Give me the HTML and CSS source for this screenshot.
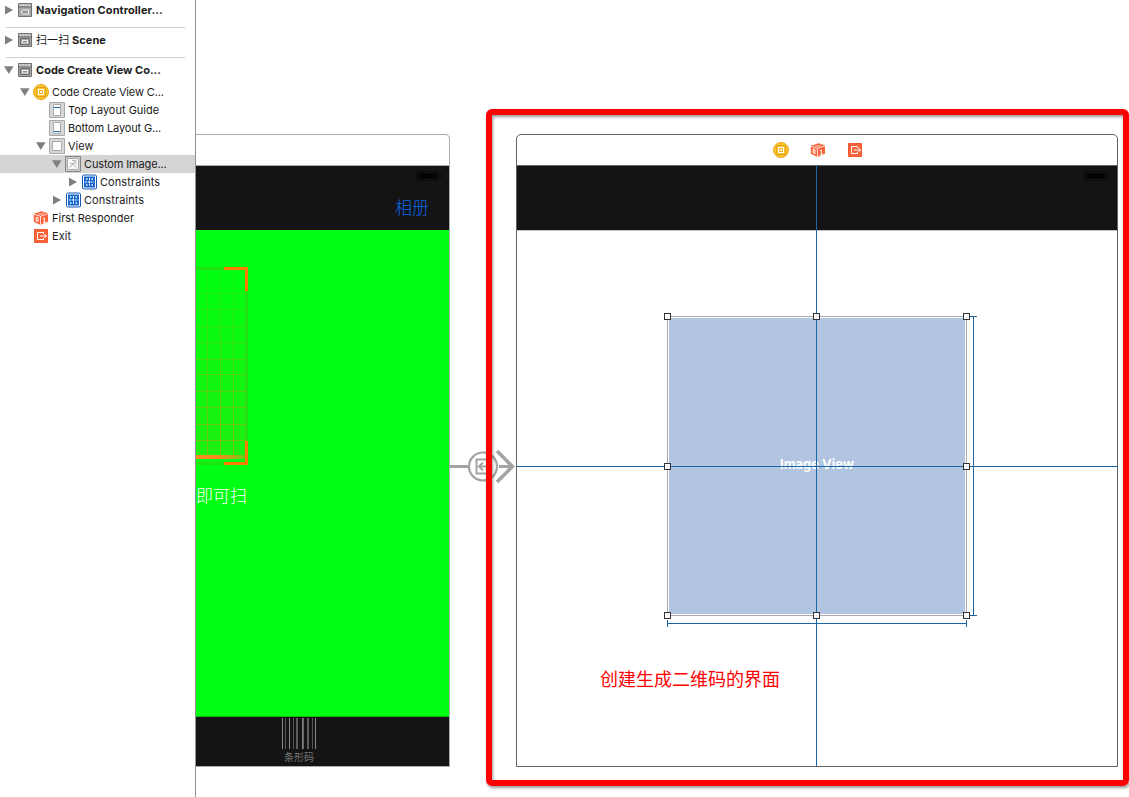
FILE: index.html
```html
<!DOCTYPE html>
<html lang="zh">
<head>
<meta charset="utf-8">
<title>Storyboard</title>
<link rel="stylesheet" href="styles.css">
</head>
<body>
<svg class="defs" width="0" height="0">
  <defs>
    <symbol id="right" viewBox="0 0 16 16"><path d="M4 3.8v8.600L12 8z" fill="#7f7f7f"/></symbol>
    <symbol id="down" viewBox="0 0 16 16"><path d="M3 4.200h9.600L7.800 12z" fill="#7f7f7f"/></symbol>
    <symbol id="scene" viewBox="0 0 16 16">
      <path d="M1.500 1.500h13v13h-13z" fill="#a9a9a9" stroke="#707070"/>
      <path d="M2 2.500h12" stroke="#dedede" stroke-dasharray="1.500 1.500"/><path d="M3 3.500h11" stroke="#dedede" stroke-dasharray="1.500 1.500"/><path d="M1 5h14" stroke="#707070"/>
      <path d="M3.500 6.500h9v6h-9z" fill="none" stroke="#6d6d6d"/><path d="M5.500 8.500h5v2.500h-5z" fill="#8d8d8d" stroke="#f2f2f2"/>
    </symbol>
    <symbol id="navscene" viewBox="0 0 16 16">
      <path d="M1.500 1.500h13v13h-13z" fill="#a9a9a9" stroke="#707070"/>
      <path d="M2 2.500h12" stroke="#dedede" stroke-dasharray="1.500 1.500"/><path d="M3 3.500h11" stroke="#dedede" stroke-dasharray="1.500 1.500"/><path d="M1 5h14" stroke="#707070"/>
      <path d="M4 10l2.200-2h5.300v4H6.200z" fill="#999" stroke="#f2f2f2"/>
    </symbol>
    <symbol id="controller" viewBox="0 0 16 16">
      <circle cx="8" cy="8" r="7.500" fill="#fdc62c" stroke="#eaa41b"/>
      <path d="M3.500 3.500h9v9h-9z" fill="#fdc62c" stroke="#e5a019"/><path d="M5.500 5.500h5v5h-5z" fill="#f3b324" stroke="#fff"/>
      <path d="M7 7h2v2H7z" fill="#fff7dc"/>
    </symbol>
    <symbol id="top" viewBox="0 0 16 16">
      <path d="M.5.5h15v15H.5z" fill="#d6d6d6" stroke="#a8a8a8"/><path d="M4.500 2.500h7v11h-7z" fill="#fff" stroke="#aaa"/><path d="M5 5.500h6" stroke="#1267a8"/>
    </symbol>
    <symbol id="bottom" viewBox="0 0 16 16">
      <path d="M.5.5h15v15H.5z" fill="#d6d6d6" stroke="#a8a8a8"/><path d="M4.500 2.500h7v11h-7z" fill="#fff" stroke="#aaa"/><path d="M5 11.500h6" stroke="#1267a8"/>
    </symbol>
    <symbol id="view" viewBox="0 0 16 16">
      <path d="M.5.5h15v15H.5z" fill="#d6d6d6" stroke="#a8a8a8"/><path d="M3.500 3.500h9v9h-9z" fill="#fff" stroke="#aaa"/>
    </symbol>
    <symbol id="image" viewBox="0 0 16 16">
      <path d="M.5.5h15v15H.5z" fill="#d0d0d0" stroke="#858585"/><path d="M2.500 2.500h11v11h-11z" fill="#f8f8f8" stroke="#aaa"/>
      <path d="M7 4.500h4M11 5L8 8l-3.500 3.500M5 7.500l3 .5 3 3.500M8.500 7h3" fill="none" stroke="#aaa" stroke-width=".9"/>
    </symbol>
    <symbol id="constraint" viewBox="0 0 16 16">
      <rect x="1" y=".5" width="15" height="15" rx="2.500" fill="#1459b8"/><path d="M2.500 2h12v12h-12z" fill="#1767cf" stroke="#fff"/>
      <path d="M8.500 4v8M4 8h9" stroke="#fff" stroke-dasharray="2 .8"/><path d="M5 5h1.500M10.500 5H12M5 11h1.500M10.500 11H12" stroke="#fff" stroke-width="1.300"/>
    </symbol>
    <symbol id="cube" viewBox="0 0 16 16">
      <path d="M.8 3.800l7.700-2.600L15 3.200v8.500L7.500 15 .8 11.800z" fill="#fa6339"/>
      <path d="M.8 4.300l6.700 2L15 3.700M7.500 6.300V15" fill="none" stroke="#fff" stroke-width=".8"/><path d="M4.500 3l6 1.800M5.500 5.200l6-2.800" stroke="#ffd0c2" stroke-width=".6"/>
      <path d="M3.200 7.200l1.800.6v4l-1.800-.9zM10 8.700l1.300-.7v4.500M9.800 13.200l3-1.200" fill="none" stroke="#fff" stroke-width="1"/>
    </symbol>
    <symbol id="exit" viewBox="0 0 16 16">
      <path d="M1.500 1.500h13v13h-13z" fill="#fa6339" stroke="#f05a32"/><path d="M10.500 6V4.500h-6v7h6V10M7 8h6.500M11.500 6l2 2-2 2" fill="none" stroke="#fff"/>
    </symbol>
  </defs>
</svg>

<aside class="outline">
  <div class="row head"><svg><use href="#right"/></svg><svg><use href="#navscene"/></svg><span>Navigation Controller...</span></div>
  <hr class="rule">
  <div class="row head"><svg><use href="#right"/></svg><svg><use href="#scene"/></svg><span><span class="han">扫一扫</span> Scene</span></div>
  <hr class="rule">
  <div class="row head"><svg><use href="#down"/></svg><svg><use href="#scene"/></svg><span class="snug">Code Create View Co...</span></div>
  <div class="tree">
    <div class="row l1"><svg><use href="#down"/></svg><svg><use href="#controller"/></svg><span class="cut">Code Create View C...</span></div>
    <div class="row l2 leaf"><svg><use href="#top"/></svg><span class="snug">Top Layout Guide</span></div>
    <div class="row l2 leaf"><svg><use href="#bottom"/></svg><span class="cut">Bottom Layout G...</span></div>
    <div class="row l2"><svg><use href="#down"/></svg><svg><use href="#view"/></svg><span class="snug">View</span></div>
    <div class="row l3 selected"><svg><use href="#down"/></svg><svg><use href="#image"/></svg><span class="cut">Custom Image...</span></div>
    <div class="row l4"><svg><use href="#right"/></svg><svg><use href="#constraint"/></svg><span>Constraints</span></div>
    <div class="row l3"><svg><use href="#right"/></svg><svg><use href="#constraint"/></svg><span>Constraints</span></div>
    <div class="row l1 leaf"><svg><use href="#cube"/></svg><span class="snug">First Responder</span></div>
    <div class="row l1 leaf"><svg><use href="#exit"/></svg><span>Exit</span></div>
  </div>
</aside>

<main class="canvas">
  <section class="scene scan">
    <div class="dock"></div>
    <div class="navbar">
      <svg class="battery" width="26" height="10"><rect x=".5" y=".5" width="22" height="9" rx="1.500" fill="none" stroke="#0b0b0b"/><path d="M2 2h19v6H2z" fill="#050505"/><path d="M24 3h1v4h-1z" fill="#050505"/></svg>
      <span class="album">相册</span>
    </div>
    <div class="scanner">
      <svg class="grid" width="60" height="204" viewBox="0 0 60 204">
        <defs>
          <linearGradient id="fade" x1="0" y1="0" x2="0" y2="1"><stop offset="0" stop-color="#ff8010" stop-opacity="0"/><stop offset="1" stop-color="#ff8010" stop-opacity=".12"/></linearGradient>
          <linearGradient id="lines" gradientUnits="userSpaceOnUse" x1="0" y1="0" x2="0" y2="200"><stop offset="0" stop-color="#ff8010" stop-opacity=".06"/><stop offset="1" stop-color="#ff8010" stop-opacity=".42"/></linearGradient>
          <linearGradient id="beam" x1="0" y1="0" x2="1" y2="0"><stop offset="0" stop-color="#ff8a20"/><stop offset=".5" stop-color="#f58a20"/><stop offset="1" stop-color="#ff8a20" stop-opacity=".3"/></linearGradient>
        </defs>
        <path d="M0 4h50v190H0z" fill="url(#fade)"/>
        <path d="M0 3.500h50M50.500 3v196M0 198.500h50" fill="none" stroke="#a06a12" stroke-opacity=".2" stroke-width="3"/>
        <path d="M11.500 4v190M24.500 4v190M37.500 4v190M0 28.500h50M0 38.500h0M0 44.500h50M0 61.500h50M0 77.500h50M0 94.500h50M0 109.500h50M0 126.500h50M0 142.500h50M0 159.500h50M0 175.500h50" stroke="url(#lines)"/>
        <path d="M0 190h49v4H0z" fill="url(#beam)"/>
        <path d="M28 3.500h24M50.500 2v24M50.500 176v24M28 198.500h24" stroke="#ff7c00" stroke-width="3" fill="none"/>
      </svg>
      <div class="hint">即可扫</div>
    </div>
    <div class="tabbar">
      <svg width="36" height="32"><path d="M1.500 0v31M8.500 0v31M21.500 0v31M34.500 0v31" stroke="#868686"/><path d="M4.500 0v31M12.500 0v31M31.500 0v31" stroke="#555"/><path d="M16 0v31M27 0v31" stroke="#5c5c5c" stroke-width="2"/><path d="M22.500 0v31" stroke="#666"/></svg>
      <span>条形码</span>
    </div>
  </section>

  <svg class="segue" width="68" height="36" viewBox="0 0 68 36" fill="none" stroke="#a3a3a3">
    <path d="M0 18.500h19M49 18.500h13" stroke-width="3"/><circle cx="33" cy="18.500" r="14" stroke-width="2.200"/>
    <path d="M37 14v-2.500H26.500v14H37V23M42 18.500H29M33 14.500l-4 4 4 4" stroke-width="2"/><path d="M47 3l15.500 15.500L47 34" stroke-width="3.500"/>
  </svg>

  <section class="scene code">
    <div class="dock">
      <svg><use href="#controller"/></svg><svg><use href="#cube"/></svg><svg><use href="#exit"/></svg>
    </div>
    <div class="navbar">
      <svg class="battery" width="26" height="10"><rect x=".5" y=".5" width="22" height="9" rx="1.500" fill="none" stroke="#0b0b0b"/><path d="M2 2h19v6H2z" fill="#050505"/><path d="M24 3h1v4h-1z" fill="#050505"/></svg>
    </div>
    <div class="content">
      <div class="imageview">Image View</div>
      <div class="note">创建生成二维码的界面</div>
    </div>
  </section>

  <svg class="guides" width="602" height="633" viewBox="516 134 602 633" fill="none" shape-rendering="crispEdges">
    <path d="M816.500 166v600M517 466.500h600M973.500 316v299M970 316.500h7M970 615.500h7M667 623.500h299M667.500 620v7M966.500 620v7" stroke="#1967a9"/>
    <g fill="#fff" fill-opacity=".88" stroke="#333">
      <path d="M664.500 313.500h6v6h-6zM813.500 313.500h6v6h-6zM963.500 313.500h6v6h-6zM664.500 463.500h6v6h-6zM963.500 463.500h6v6h-6zM664.500 612.500h6v6h-6zM813.500 612.500h6v6h-6zM963.500 612.500h6v6h-6z"/>
    </g>
  </svg>
  <div class="callout"></div>
</main>
</body>
</html>
```

FILE: styles.css
```css
* { box-sizing: border-box; }
body {
  margin: 0;
  width: 1129px;
  height: 797px;
  display: flex;
  overflow: hidden;
  background: #fff;
  color: #1c1c1c;
  font-family: Inter, "Noto Sans CJK SC", sans-serif;
  font-size: 11px;
}
svg { display: block; flex: none; }
.defs { position: absolute; }

.outline { width: 196px; border-right: 1px solid #8e8e8e; flex: none; }
.row { display: flex; align-items: center; height: 18px; white-space: nowrap; line-height: 14px; }
.row svg { width: 16px; height: 16px; }
.row > span { margin-left: 3px; letter-spacing: 0.08px; }
.row > .snug { letter-spacing: 0; }
.row > .cut { letter-spacing: -0.14px; }
.head { height: 20px; padding-left: 1px; font-weight: 700; }
.head .han { font-weight: 400; line-height: 1; }
.rule { border: 0; height: 1px; background: #cfcfcf; margin: 7px 10px 2px 6px; }
.tree { padding-top: 3px; }
.l1 { padding-left: 17px; }
.l2 { padding-left: 33px; }
.l3 { padding-left: 49px; }
.l4 { padding-left: 65px; }
.leaf > svg { margin-left: 16px; }
.selected { background: #d5d5d5; }

.canvas { position: relative; flex: 1; }
.scene { position: absolute; top: 134px; height: 633px; display: flex; flex-direction: column; background: #fff; }
.scan { left: 0; width: 254px; border: 1px solid #ababab; border-left: 0; border-radius: 0 5px 0 0; }
.code { left: 320px; width: 602px; border: 1px solid #626262; border-radius: 5px 5px 0 0; }
.dock { height: 31px; flex: none; border-bottom: 1px solid #aaa; display: flex; justify-content: center; align-items: center; gap: 21px; }
.code .dock { border-color: #626262; padding-left: 2px; }
.dock svg { width: 16px; height: 16px; }
.navbar { height: 64px; flex: none; background: #141414; display: flex; flex-direction: column; align-items: flex-end; }
.battery { margin: 5px 7px 0 0; }
.album { margin: 14px 20px 0 0; color: #0868e8; font-size: 17px; font-weight: 300; line-height: 26px; }
.scanner { height: 487px; flex: none; background: #00ff12; border-bottom: 1px solid #09bd12; padding-top: 35px; }
.hint { color: #fff; font-size: 17px; font-weight: 300; line-height: 26px; margin-top: 14px; }
.tabbar { flex: 1; background: #141414; display: flex; flex-direction: column; align-items: center; color: #777; font-size: 10px; line-height: 14px; padding: 1px 47px 0 0; }

.content { flex: 1; border-top: 1px solid #c0c0c0; display: flex; flex-direction: column; align-items: flex-start; }
.imageview {
  margin: 85px 0 0 150px;
  width: 300px;
  height: 300px;
  border: 1px solid #aaa;
  box-shadow: inset 0 0 0 1px #fff;
  background: #b1c5e0;
  color: #fff;
  display: flex;
  justify-content: center;
  align-items: center;
  font-weight: 700;
  font-size: 13px;
  padding-bottom: 4px;
}
.note { margin: 50px 0 0 83px; font-size: 18px; line-height: 27px; color: #f00; }

.segue { position: absolute; left: 254px; top: 448px; }
.guides { position: absolute; left: 320px; top: 134px; }
.callout {
  position: absolute;
  left: 290px;
  top: 109px;
  width: 643px;
  height: 677px;
  border: 6px solid #f00;
  border-radius: 6px;
  box-shadow: 1px 2px 3px rgba(0, 0, 0, .4), inset 1px 2px 3px rgba(0, 0, 0, .4);
}
```
